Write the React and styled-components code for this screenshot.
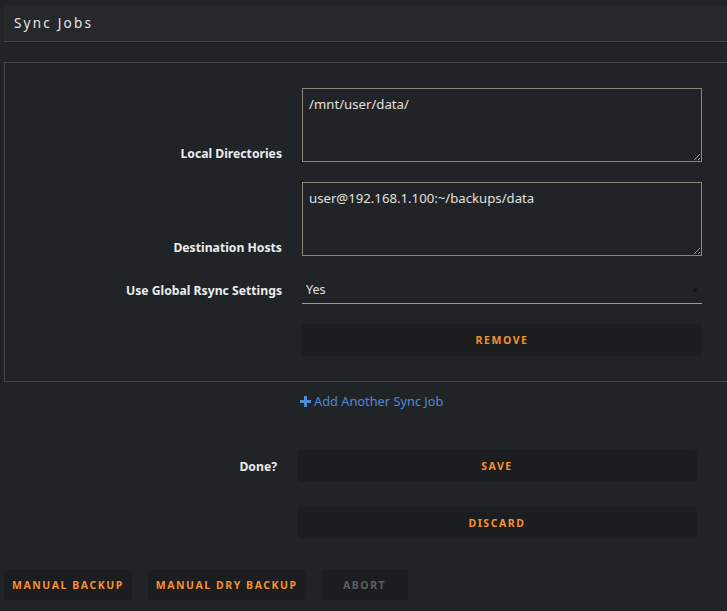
import React from "react";
import styled, { createGlobalStyle } from "styled-components";

const Global = createGlobalStyle`
  html, body { margin: 0; padding: 0; background: #212427; overflow: hidden; }
  body { font-family: "Noto Sans", "Open Sans", sans-serif; color: #e2e2e2; }
  * { box-sizing: border-box; }
`;

const Page = styled.div`
  width: 760px;
  padding: 6px 0 0 4px;
  display: flex;
  flex-direction: column;
`;

const Header = styled.div`
  height: 36px;
  background: #26292c;
  border-bottom: 1px solid #45484b;
  display: flex;
  align-items: center;
  padding: 0 0 2px 10px;
`;

const Title = styled.span`
  font-size: 13.5px;
  letter-spacing: 2.2px;
  color: #e6e6e6;
`;

const Panel = styled.div`
  margin-top: 20px;
  border: 1px solid #45484b;
  padding: 25px 0 25px 4px;
  display: flex;
  flex-direction: column;
  gap: 20px;
`;

const Row = styled.div`
  display: flex;
  align-items: ${(p) => p.$align || "center"};
  gap: 20px;
`;

const Label = styled.div`
  width: 273px;
  flex: none;
  text-align: right;
  font-weight: 700;
  font-size: 12.2px;
  color: #ececec;
`;

const Area = styled.textarea`
  width: 400px;
  height: 74px;
  background: transparent;
  border: 1px solid #8c857a;
  color: #e0e0e0;
  font-family: "Noto Sans", sans-serif;
  font-size: 13.2px;
  padding: 6px 6px;
  margin: 0;
  outline: none;
  display: block;
`;

const SelectWrap = styled.div`
  position: relative;
  width: 400px;
  height: 28px;
  border-bottom: 1px solid #9a9a9a;
  display: flex;
  align-items: center;
`;

const Select = styled.select`
  appearance: none;
  width: 100%;
  height: 100%;
  background: transparent;
  border: none;
  color: #e0e0e0;
  font-family: "Noto Sans", sans-serif;
  font-size: 12.5px;
  padding: 0 4px;
  outline: none;
`;

const Arrow = styled.span`
  position: absolute;
  right: 3px;
  top: 8px;
  font-size: 8px;
  color: #121212;
  pointer-events: none;
`;

const Button = styled.button`
  height: ${(p) => p.$h || 32}px;
  width: ${(p) => (p.$w ? `${p.$w}px` : "auto")};
  min-width: ${(p) => p.$min || 0}px;
  padding: 0 8px;
  background: #1b1d1f;
  border: none;
  border-radius: 4px;
  color: ${(p) => (p.disabled ? "#5c5f62" : "#f7902f")};
  font-family: "Noto Sans", sans-serif;
  font-weight: 700;
  font-size: 10.5px;
  letter-spacing: 1.55px;
  text-transform: uppercase;
  cursor: pointer;
`;

const Spacer = styled.div`
  width: 273px;
  flex: none;
`;

const AddLink = styled.a`
  margin: 10px 0 0 296px;
  display: flex;
  align-items: center;
  gap: 3px;
  color: #4d8ad6;
  font-size: 12.8px;
  text-decoration: none;
  cursor: pointer;
`;

const Actions = styled.div`
  margin-top: 40px;
  display: flex;
  flex-direction: column;
  gap: 25px;
`;

const Footer = styled.div`
  margin-top: 30px;
  display: flex;
  gap: 16px;
`;

export default function App() {
  return (
    <>
      <Global />
      <Page>
        <Header>
          <Title>Sync Jobs</Title>
        </Header>
        <Panel>
          <Row $align="flex-end">
            <Label>Local Directories</Label>
            <Area readOnly defaultValue="/mnt/user/data/" />
          </Row>
          <Row $align="flex-end">
            <Label>Destination Hosts</Label>
            <Area readOnly defaultValue="user@192.168.1.100:~/backups/data" />
          </Row>
          <Row>
            <Label>Use Global Rsync Settings</Label>
            <SelectWrap>
              <Select defaultValue="Yes">
                <option>Yes</option>
                <option>No</option>
              </Select>
              <Arrow>▼</Arrow>
            </SelectWrap>
          </Row>
          <Row>
            <Spacer />
            <Button $w={400}>Remove</Button>
          </Row>
        </Panel>
        <AddLink>
          <svg width="11" height="11" viewBox="0 0 11 11">
            <path d="M4 0h3v4h4v3H7v4H4V7H0V4h4z" fill="#4d8ad6" />
          </svg>
          Add Another Sync Job
        </AddLink>
        <Actions>
          <Row>
            <Label>Done?</Label>
            <Button $w={400}>Save</Button>
          </Row>
          <Row>
            <Spacer />
            <Button $w={400}>Discard</Button>
          </Row>
        </Actions>
        <Footer>
          <Button $h={31}>Manual Backup</Button>
          <Button $h={31}>Manual Dry Backup</Button>
          <Button $h={31} $min={86} disabled>Abort</Button>
        </Footer>
      </Page>
    </>
  );
}
